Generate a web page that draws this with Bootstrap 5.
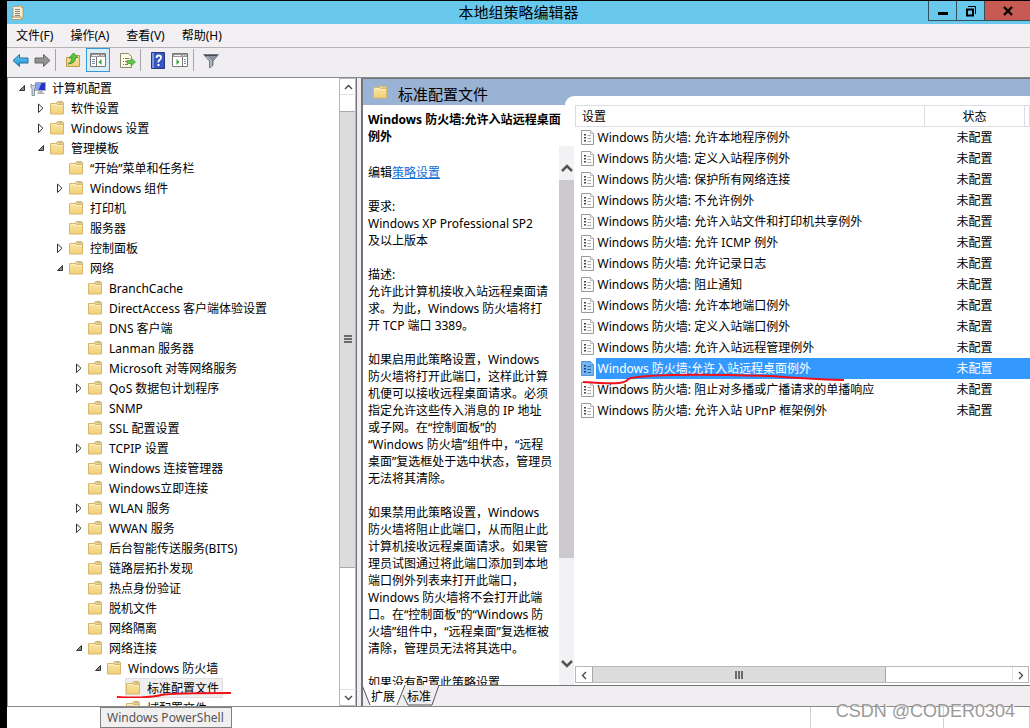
<!DOCTYPE html>
<html lang="zh-CN">
<head>
<meta charset="utf-8">
<meta name="viewport" content="width=device-width, initial-scale=1">
<title>本地组策略编辑器</title>
<link href="https://cdn.jsdelivr.net/npm/bootstrap@5.3.0/dist/css/bootstrap.min.css" rel="stylesheet">
<style>
  body { font-family: "Noto Sans", "Noto Sans CJK SC", sans-serif; font-size: 12px; line-height: 17px; color: #000; background: #000; padding: 1px 0 0 7px; }
  button { font: inherit; color: inherit; background: none; border: 0; padding: 0; }
  svg { display: block; flex: none; }
  .titlebar { display: grid; grid-template-columns: 1fr auto 1fr; background: #69c9ec; height: 23px; }
  .titlebar h1 { font-size: 15px; line-height: 23px; font-weight: 400; margin: 0; }
  .winbtn { width: 28px; height: 20px; border: 1px solid #34505c; border-top: 0; border-right: 0; display: flex; align-items: center; justify-content: center; }
  .winbtn.shut { width: 46px; background: #c75a52; }
  .menubar { background: #f2f0f2; height: 23px; padding-left: 9px; gap: 17px; }
  .tools { background: #f0eef0; height: 31px; border-top: 1px solid #b4b4b4; border-bottom: 1px solid #88888c; padding: 0 0 5px 4px; }
  .tools button { width: 18px; height: 24px; display: flex; align-items: center; justify-content: center; }
  .tools .pressed { width: 24px; background: #d9edf8; border: 1px solid #3399d6; }
  .divider { width: 1px; height: 22px; background: #a5a5a8; }
  .work { background: #f0eef0; }
  .treepane { width: 350px; background: #fff; border-left: 1px solid #999; border-right: 1px solid #74747a; }
  .tree, .tree ul { list-style: none; margin: 0; padding: 0; }
  .tree ul { padding-left: 19px; }
  .node { display: flex; align-items: center; height: 20px; padding-left: 9px; white-space: nowrap; position: relative; }
  .node .twist { width: 10px; height: 10px; margin-right: 3px; flex: none; }
  .node .label { padding-left: 6px; }
  .node .picked { display: flex; align-items: center; height: 20px; background: #f0eff0; outline: 1px solid #e0e0e0; outline-offset: -1px; padding-right: 4px; }
  .stroke { position: absolute; pointer-events: none; }
  .vbar { width: 17px; border: 1px solid #b8b8ba; background: #fff; }
  .vbar button, .hbar button { width: 16px; height: 16px; display: flex; align-items: center; justify-content: center; }
  .vbar .thumb { background: #dcdcdd; border: 1px solid #a8a8b4; border-width: 1px 0; margin-top: 16px; flex: 0 0 73%; }
  .rightpane { border-left: 2px solid #747478; margin-left: 4px; }
  .heading { height: 27px; background: #9ab2d3; border-top: 1px solid #747478; padding-left: 9px; }
  .heading h2 { font-size: 15px; line-height: 20px; font-weight: 400; margin: 4px 0 0 10px; }
  .about { width: 212px; background: #fff; }
  .about h3 { font-size: 12px; line-height: 17px; font-weight: 700; margin: 0; padding: 6px 0 0 5px; white-space: nowrap; height: 43px; }
  .prose { padding: 18px 0 0 5px; white-space: nowrap; }
  .prose p { margin: 0 0 17px; }
  .prose a { color: #0a6fd6; }
  .softbar { width: 16px; background: #f2f1f3; border-right: 1px solid #fff; }
  .softbar button { height: 34px; display: flex; align-items: center; justify-content: center; }
  .softbar .thumb { background: #cccacc; flex: 0 0 378px; }
  .listing { background: #fff; margin-top: -9px; padding-top: 9px; position: relative; }
  .listing::before { content: ""; position: absolute; left: -10px; top: 0; width: 10px; height: 9px; background: #fff; border-top-left-radius: 10px; }
  .grid { table-layout: fixed; color: #000; margin: 0; }
  .grid > :not(caption) > * > * { padding: 0 0 0 2px; height: 21px; line-height: 19px; vertical-align: middle; background: none; color: inherit; white-space: nowrap; box-shadow: none; }
  .grid > thead > tr > th { font-weight: 400; border: 1px solid #dcdce2; border-left: 0; padding-left: 6px; }
  .grid > thead > tr > th:first-child { border-left: 1px solid #dcdce2; }
  .grid > tbody > tr > td:first-child { padding-left: 5px; }
  .grid > tbody > tr > td.state, .grid > thead > tr > th.state { text-align: center; padding: 0; }
  .grid > tbody > tr.chosen > td { color: #fff; position: relative; }
  .grid > tbody > tr.chosen > td:not(:first-child) { background: #3399ff; }
  .hbar { height: 17px; border: 1px solid #b8b8ba; background: #fff; margin: 0 1px 2px 0; }
  .hbar .thumb { background: #dcdcdd; border: 1px solid #a8a8a8; border-width: 0 1px; flex: 0 0 65%; }
  .tabs { height: 21px; position: relative; border-top: 1px solid #747478; }
  .tabs button { position: relative; line-height: 19px; }
  .tabs svg { position: absolute; left: -2px; top: -1px; }
  .under { height: 22px; border-top: 1px solid #88888c; background: #fff; position: relative; }
  .tip { margin-left: 93px; padding: 0 7px 0 6px; line-height: 19px; border: 1px solid #808080; background: #f1f0f1; color: #555; font-size: 12px; }
  .cell { border-right: 1px solid #d0d0d0; }
  .stamp { position: absolute; right: 15px; bottom: 5px; font: 18px/24px "Liberation Sans", sans-serif; color: #9a9a9a; text-shadow: 1px 1px 0 #fff; white-space: nowrap; }
</style>
</head>
<body class="d-flex flex-column vh-100 overflow-hidden">

<svg width="0" height="0" class="position-absolute" aria-hidden="true">
  <defs>
    <linearGradient id="gold" x1="0" y1="0" x2="0" y2="1"><stop offset="0" stop-color="#fae5a4"/><stop offset="1" stop-color="#f2d078"/></linearGradient>
    <linearGradient id="blue" x1="0" y1="0" x2="0" y2="1"><stop offset="0" stop-color="#6fd0f7"/><stop offset="1" stop-color="#168ed2"/></linearGradient>
    <symbol id="folder" viewBox="0 0 16 16">
      <path d="M7.500 5V2.500l1-1h4.500l1.500 1V5z" fill="#f2d58b" stroke="#c8a95e" stroke-width=".8"/>
      <path d="M10 2.700h3" stroke="#8fb6cf"/>
      <path d="M1.500 3.500h6l1.500 1h5.500v9.500h-13z" fill="url(#gold)" stroke="#d6b76c"/>
      <path d="M2.500 4.500h4.500l1.500 1h5" fill="none" stroke="#fff3cf" stroke-width=".8"/>
    </symbol>
    <symbol id="shut" viewBox="0 0 10 10"><path d="M2.500 1v8.500l4.500-4.250z" fill="#fff" stroke="#333"/></symbol>
    <symbol id="open" viewBox="0 0 10 10"><path d="M7.500 2.500v5h-5z" fill="#8a8a8a" stroke="#333"/></symbol>
    <symbol id="sheet" viewBox="0 0 13 15">
      <path d="M.5.5h9l3 3v11h-12z" fill="#fcfcfc" stroke="#9a9a9a"/><path d="M9.500.5v3h3" fill="#eee" stroke="#bbb"/>
      <path d="M3 4h2v1.500H3zM3 7h2v1.500H3zM3 10h2v1.500H3z" fill="#444"/><path d="M6.500 5.500H10M6.500 8.500H10M6.500 11.500H10" stroke="#aaa"/>
    </symbol>
    <symbol id="sheetblue" viewBox="0 0 13 15">
      <path d="M.5.5h9l3 3v11h-12z" fill="#76b4f2" stroke="#4f93d8"/><path d="M9.500.5v3h3" fill="#a8d0f8" stroke="#5c9cdd"/>
      <path d="M3 4h2v1.500H3zM3 7h2v1.500H3zM3 10h2v1.500H3z" fill="#123f78"/><path d="M6.500 5.500H10M6.500 8.500H10M6.500 11.500H10" stroke="#2a65a8"/>
    </symbol>
  </defs>
</svg>

<header class="titlebar flex-shrink-0">
  <svg class="mt-1 ms-1" width="13" height="15" viewBox="0 0 13 15" aria-hidden="true"><path d="M2 1.500q-1.500 1 0 2V12H0q0 2.500 2 2.500h8.500q1.500-.5 1.500-2.500V3q0-2-2-2z" fill="#f5edcf" stroke="#a48f64" stroke-width=".8"/><path d="M10 1q2.500 0 2.500 2H10z" fill="#c7a976"/><path d="M4 4.500h5M4 6.500h5M4 8.500h5M4 10.500h5" stroke="#8d8373"/><path d="M1 12h9q0 2 1 2" fill="none" stroke="#b18b67"/></svg>
  <h1>本地组策略编辑器</h1>
  <div class="d-flex justify-content-end">
    <button class="winbtn" aria-label="最小化"><svg width="12" height="12"><path d="M1 7h10v3H1z"/></svg></button>
    <button class="winbtn" aria-label="还原"><svg width="12" height="12" fill="none" stroke="#000"><path d="M2 4.500h6v6H2z" stroke-width="2"/><path d="M3 1.500h7.500V9"/></svg></button>
    <button class="winbtn shut" aria-label="关闭"><svg width="10" height="10"><path d="M1 1l8 8M9 1L1 9" stroke="#000" stroke-width="2.400"/></svg></button>
  </div>
</header>

<nav class="menubar d-flex align-items-center flex-shrink-0">
  <button>文件(F)</button><button>操作(A)</button><button>查看(V)</button><button>帮助(H)</button>
</nav>

<div class="tools d-flex align-items-center flex-shrink-0" role="toolbar">
  <button aria-label="后退"><svg width="17" height="15"><path d="M1 7.500L7.500 1.500V5H16v5H7.500v3.500z" fill="url(#blue)" stroke="#286f9f"/></svg></button>
  <button class="ms-1" aria-label="前进"><svg width="17" height="15"><path d="M16 7.500L9.500 1.500V5H1v5h8.500v3.500z" fill="#929292" stroke="#666"/></svg></button>
  <span class="divider ms-1"></span>
  <button class="ms-2" aria-label="上一级"><svg width="16" height="16"><path d="M1.500 5.500h6l1-2h6v11h-13z" fill="url(#gold)" stroke="#c09a4a"/><path d="M3 12q4-2 4-6H4l4.500-5L13 5.500h-2.500q0 6-7.500 6.500z" fill="#58c740" stroke="#2d8b22" stroke-width=".8"/></svg></button>
  <button class="pressed ms-1" aria-label="显示控制台树"><svg width="16" height="14"><path d="M.5.5h15v13H.5z" fill="#fff" stroke="#777"/><path d="M1 1h14v3H1z" fill="#999"/><path d="M2 2.500h7M11 2.500h1M13 2.500h1" stroke="#eee"/><path d="M6.500 4v9.500" stroke="#777"/><path d="M2 6.500h3M2 8.500h3M2 10.500h3" stroke="#778fa8"/><path d="M11.500 6v6l-3-3z" fill="#35a52f"/></svg></button>
  <button class="ms-2" aria-label="导出列表"><svg width="17" height="16"><path d="M1.500 1.500h8l3 3v11h-11z" fill="#fffbe3" stroke="#8b8b76"/><path d="M4 6.500h1M6 6.500h4M4 9.500h1M6 9.500h3M4 12.500h1M6 12.500h3" stroke="#777"/><path d="M8 8.500h4V6l4.500 4-4.500 4v-2.500H8z" fill="#62c64c" stroke="#3b9f2d" stroke-width=".7"/></svg></button>
  <span class="divider ms-1"></span>
  <button class="ms-2" aria-label="帮助"><svg width="14" height="17"><path d="M.5.5h13v16H.5z" fill="#3657c0" stroke="#23378b"/><path d="M1 1h2v15H1z" fill="#7894e3"/><path d="M5.500 6q0-2.500 2.300-2.500T10 5.500Q10 7 8.500 8t-1 2.500" fill="none" stroke="#fff" stroke-width="1.800"/><path d="M6.500 12h2v2h-2z" fill="#fff"/></svg></button>
  <button class="ms-1" aria-label="显示操作窗格"><svg width="16" height="14"><path d="M.5.5h15v13H.5z" fill="#fff" stroke="#777"/><path d="M1 1h14v3H1z" fill="#999"/><path d="M2 2.500h7M11 2.500h1M13 2.500h1" stroke="#eee"/><path d="M10.500 4v9.500" stroke="#777"/><path d="M12 6.500h2M12 8.500h2M12 10.500h2" stroke="#778fa8"/><path d="M4.500 6v6l3-3z" fill="#35a52f"/></svg></button>
  <span class="divider ms-1"></span>
  <button class="ms-2" aria-label="筛选器"><svg width="16" height="15"><path d="M.5 1.500h15L10 8v4.500L6.500 15V8z" fill="#88919c" stroke="#606a75" stroke-width=".8"/><path d="M2 2.500h12" stroke="#3f4c58"/><path d="M4 4l4 4v6" fill="none" stroke="#d2d8de"/></svg></button>
</div>

<main class="work d-flex flex-grow-1 overflow-hidden">
  <section class="treepane d-flex flex-shrink-0">
    <div class="flex-grow-1 overflow-hidden">
      <ul class="tree">
        <li><div class="node"><svg class="twist"><use href="#open"/></svg><svg width="16" height="16"><path d="M5.500 2.500h10v8h-10z" fill="#2137c6" stroke="#a9a9bc"/><path d="M6 3h5.500l-3 7H6z" fill="#8c9ff3"/><path d="M8.500 11h4v1.500h2V14H7v-1.500h1.500z" fill="#b4b4ba"/><path d="M1 4v3q0 1 1 1.500V15.500h2.500v-7q1-.5 1-1.500V4L4 5.500H2.500z" fill="#c9d6df" stroke="#6d808d" stroke-width=".8"/></svg><span class="label">计算机配置</span></div>
          <ul>
            <li><div class="node"><svg class="twist"><use href="#shut"/></svg><svg width="16" height="16"><use href="#folder"/></svg><span class="label">软件设置</span></div></li>
            <li><div class="node"><svg class="twist"><use href="#shut"/></svg><svg width="16" height="16"><use href="#folder"/></svg><span class="label">Windows 设置</span></div></li>
            <li><div class="node"><svg class="twist"><use href="#open"/></svg><svg width="16" height="16"><use href="#folder"/></svg><span class="label">管理模板</span></div>
              <ul>
                <li><div class="node"><span class="twist"></span><svg width="16" height="16"><use href="#folder"/></svg><span class="label">“开始”菜单和任务栏</span></div></li>
                <li><div class="node"><svg class="twist"><use href="#shut"/></svg><svg width="16" height="16"><use href="#folder"/></svg><span class="label">Windows 组件</span></div></li>
                <li><div class="node"><span class="twist"></span><svg width="16" height="16"><use href="#folder"/></svg><span class="label">打印机</span></div></li>
                <li><div class="node"><span class="twist"></span><svg width="16" height="16"><use href="#folder"/></svg><span class="label">服务器</span></div></li>
                <li><div class="node"><svg class="twist"><use href="#shut"/></svg><svg width="16" height="16"><use href="#folder"/></svg><span class="label">控制面板</span></div></li>
                <li><div class="node"><svg class="twist"><use href="#open"/></svg><svg width="16" height="16"><use href="#folder"/></svg><span class="label">网络</span></div>
                  <ul>
                    <li><div class="node"><span class="twist"></span><svg width="16" height="16"><use href="#folder"/></svg><span class="label">BranchCache</span></div></li>
                    <li><div class="node"><span class="twist"></span><svg width="16" height="16"><use href="#folder"/></svg><span class="label">DirectAccess 客户端体验设置</span></div></li>
                    <li><div class="node"><span class="twist"></span><svg width="16" height="16"><use href="#folder"/></svg><span class="label">DNS 客户端</span></div></li>
                    <li><div class="node"><span class="twist"></span><svg width="16" height="16"><use href="#folder"/></svg><span class="label">Lanman 服务器</span></div></li>
                    <li><div class="node"><svg class="twist"><use href="#shut"/></svg><svg width="16" height="16"><use href="#folder"/></svg><span class="label">Microsoft 对等网络服务</span></div></li>
                    <li><div class="node"><svg class="twist"><use href="#shut"/></svg><svg width="16" height="16"><use href="#folder"/></svg><span class="label">QoS 数据包计划程序</span></div></li>
                    <li><div class="node"><span class="twist"></span><svg width="16" height="16"><use href="#folder"/></svg><span class="label">SNMP</span></div></li>
                    <li><div class="node"><span class="twist"></span><svg width="16" height="16"><use href="#folder"/></svg><span class="label">SSL 配置设置</span></div></li>
                    <li><div class="node"><svg class="twist"><use href="#shut"/></svg><svg width="16" height="16"><use href="#folder"/></svg><span class="label">TCPIP 设置</span></div></li>
                    <li><div class="node"><span class="twist"></span><svg width="16" height="16"><use href="#folder"/></svg><span class="label">Windows 连接管理器</span></div></li>
                    <li><div class="node"><span class="twist"></span><svg width="16" height="16"><use href="#folder"/></svg><span class="label">Windows立即连接</span></div></li>
                    <li><div class="node"><svg class="twist"><use href="#shut"/></svg><svg width="16" height="16"><use href="#folder"/></svg><span class="label">WLAN 服务</span></div></li>
                    <li><div class="node"><svg class="twist"><use href="#shut"/></svg><svg width="16" height="16"><use href="#folder"/></svg><span class="label">WWAN 服务</span></div></li>
                    <li><div class="node"><span class="twist"></span><svg width="16" height="16"><use href="#folder"/></svg><span class="label">后台智能传送服务(BITS)</span></div></li>
                    <li><div class="node"><span class="twist"></span><svg width="16" height="16"><use href="#folder"/></svg><span class="label">链路层拓扑发现</span></div></li>
                    <li><div class="node"><span class="twist"></span><svg width="16" height="16"><use href="#folder"/></svg><span class="label">热点身份验证</span></div></li>
                    <li><div class="node"><span class="twist"></span><svg width="16" height="16"><use href="#folder"/></svg><span class="label">脱机文件</span></div></li>
                    <li><div class="node"><span class="twist"></span><svg width="16" height="16"><use href="#folder"/></svg><span class="label">网络隔离</span></div></li>
                    <li><div class="node"><svg class="twist"><use href="#open"/></svg><svg width="16" height="16"><use href="#folder"/></svg><span class="label">网络连接</span></div>
                      <ul>
                        <li><div class="node"><svg class="twist"><use href="#open"/></svg><svg width="16" height="16"><use href="#folder"/></svg><span class="label">Windows 防火墙</span></div>
                          <ul>
                            <li><div class="node"><span class="twist"></span><span class="picked"><svg width="16" height="16"><use href="#folder"/></svg><span class="label">标准配置文件</span></span>
                              <svg class="stroke start-0 bottom-0" width="130" height="8" fill="none" stroke="#f0101a" stroke-width="2"><path d="M14 7q18 1 30 0t14-2q10-2 70-2"/></svg></div></li>
                            <li><div class="node"><span class="twist"></span><svg width="16" height="16"><use href="#folder"/></svg><span class="label">域配置文件</span></div></li>
                          </ul></li>
                      </ul></li>
                  </ul></li>
              </ul></li>
          </ul></li>
      </ul>
    </div>
    <div class="vbar d-flex flex-column flex-shrink-0">
      <button class="border-bottom" aria-label="向上滚动"><svg width="9" height="6"><path d="M1 5l3.500-3.500L8 5" fill="none" stroke="#444" stroke-width="1.300"/></svg></button>
      <div class="thumb d-flex align-items-center justify-content-center"><svg width="8" height="8"><path d="M0 1h8M0 4h8M0 7h8" stroke="#444" stroke-width="1.500"/></svg></div>
      <button class="mt-auto border-top" aria-label="向下滚动"><svg width="9" height="6"><path d="M1 1l3.500 3.500L8 1" fill="none" stroke="#444" stroke-width="1.300"/></svg></button>
    </div>
  </section>

  <section class="rightpane d-flex flex-column flex-grow-1 overflow-hidden">
    <div class="heading d-flex align-items-center flex-shrink-0"><svg width="16" height="16"><use href="#folder"/></svg><h2>标准配置文件</h2></div>
    <div class="d-flex flex-grow-1" style="min-height:0">
      <article class="about d-flex flex-column flex-shrink-0">
        <h3>Windows 防火墙:允许入站远程桌面<br>例外</h3>
        <div class="d-flex flex-grow-1 overflow-hidden">
          <div class="prose flex-grow-1 overflow-hidden">
            <p>编辑<a href="#">策略设置</a></p>
            <p>要求:<br>Windows XP Professional SP2<br>及以上版本</p>
            <p>描述:<br>允许此计算机接收入站远程桌面请<br>求。为此，Windows 防火墙将打<br>开 TCP 端口 3389。</p>
            <p>如果启用此策略设置，Windows<br>防火墙将打开此端口，这样此计算<br>机便可以接收远程桌面请求。必须<br>指定允许这些传入消息的 IP 地址<br>或子网。在“控制面板”的<br>“Windows 防火墙”组件中，“远程<br>桌面”复选框处于选中状态，管理员<br>无法将其清除。</p>
            <p>如果禁用此策略设置，Windows<br>防火墙将阻止此端口，从而阻止此<br>计算机接收远程桌面请求。如果管<br>理员试图通过将此端口添加到本地<br>端口例外列表来打开此端口，<br>Windows 防火墙将不会打开此端<br>口。在“控制面板”的“Windows 防<br>火墙”组件中，“远程桌面”复选框被<br>清除，管理员无法将其选中。</p>
            <p>如果没有配置此策略设置</p>
          </div>
          <div class="softbar d-flex flex-column flex-shrink-0">
            <button aria-label="向上滚动"><svg class="mt-2" width="12" height="9"><path d="M1 8l5-5 5 5" fill="none" stroke="#555" stroke-width="2.500"/></svg></button>
            <div class="thumb"></div>
            <button class="mt-auto mb-1" aria-label="向下滚动"><svg width="12" height="9"><path d="M1 1l5 5 5-5" fill="none" stroke="#555" stroke-width="2.500"/></svg></button>
          </div>
        </div>
      </article>
      <div class="listing d-flex flex-column flex-grow-1">
        <table class="table table-borderless grid">
          <colgroup><col style="width:20px"><col><col style="width:100px"><col style="width:5px"></colgroup>
          <thead><tr><th colspan="2">设置</th><th class="state">状态</th><th class="p-0"></th></tr></thead>
          <tbody>
            <tr><td><svg width="13" height="15"><use href="#sheet"/></svg></td><td>Windows 防火墙: 允许本地程序例外</td><td class="state">未配置</td><td></td></tr>
            <tr><td><svg width="13" height="15"><use href="#sheet"/></svg></td><td>Windows 防火墙: 定义入站程序例外</td><td class="state">未配置</td><td></td></tr>
            <tr><td><svg width="13" height="15"><use href="#sheet"/></svg></td><td>Windows 防火墙: 保护所有网络连接</td><td class="state">未配置</td><td></td></tr>
            <tr><td><svg width="13" height="15"><use href="#sheet"/></svg></td><td>Windows 防火墙: 不允许例外</td><td class="state">未配置</td><td></td></tr>
            <tr><td><svg width="13" height="15"><use href="#sheet"/></svg></td><td>Windows 防火墙: 允许入站文件和打印机共享例外</td><td class="state">未配置</td><td></td></tr>
            <tr><td><svg width="13" height="15"><use href="#sheet"/></svg></td><td>Windows 防火墙: 允许 ICMP 例外</td><td class="state">未配置</td><td></td></tr>
            <tr><td><svg width="13" height="15"><use href="#sheet"/></svg></td><td>Windows 防火墙: 允许记录日志</td><td class="state">未配置</td><td></td></tr>
            <tr><td><svg width="13" height="15"><use href="#sheet"/></svg></td><td>Windows 防火墙: 阻止通知</td><td class="state">未配置</td><td></td></tr>
            <tr><td><svg width="13" height="15"><use href="#sheet"/></svg></td><td>Windows 防火墙: 允许本地端口例外</td><td class="state">未配置</td><td></td></tr>
            <tr><td><svg width="13" height="15"><use href="#sheet"/></svg></td><td>Windows 防火墙: 定义入站端口例外</td><td class="state">未配置</td><td></td></tr>
            <tr><td><svg width="13" height="15"><use href="#sheet"/></svg></td><td>Windows 防火墙: 允许入站远程管理例外</td><td class="state">未配置</td><td></td></tr>
            <tr class="chosen"><td class="z-1"><svg width="13" height="15"><use href="#sheetblue"/></svg><svg class="stroke start-0 top-0" width="272" height="28" fill="none" stroke="#f0101a" stroke-width="2"><path d="M7 24q28 2 36 1t9-4q8-3 43-4t100 1q38 3 73 4"/></svg></td><td>Windows 防火墙:允许入站远程桌面例外</td><td class="state">未配置</td><td></td></tr>
            <tr><td><svg width="13" height="15"><use href="#sheet"/></svg></td><td>Windows 防火墙: 阻止对多播或广播请求的单播响应</td><td class="state">未配置</td><td></td></tr>
            <tr><td><svg width="13" height="15"><use href="#sheet"/></svg></td><td>Windows 防火墙: 允许入站 UPnP 框架例外</td><td class="state">未配置</td><td></td></tr>
          </tbody>
        </table>
        <div class="hbar d-flex mt-auto">
          <button aria-label="向左滚动"><svg width="6" height="9"><path d="M5 1L1.500 4.500 5 8" fill="none" stroke="#444" stroke-width="1.300"/></svg></button>
          <div class="thumb d-flex align-items-center justify-content-center"><svg width="8" height="8"><path d="M1 0v8M4 0v8M7 0v8" stroke="#444" stroke-width="1.500"/></svg></div>
          <button class="ms-auto border-start" aria-label="向右滚动"><svg width="6" height="9"><path d="M1 1l3.500 3.500L1 8" fill="none" stroke="#444" stroke-width="1.300"/></svg></button>
        </div>
      </div>
    </div>
    <div class="tabs d-flex flex-shrink-0 ps-2">
      <svg width="80" height="21"><path d="M41 0l6 20h24l7-20z" fill="#f0eef0"/><path d="M42 10l5 10h24l7-20" fill="none" stroke="#555"/><path d="M1 0l8 20h27l8-20z" fill="#fff"/><path d="M1 0l8 20M36 20l8-20" fill="none" stroke="#555"/></svg>
      <button>扩展</button><button class="ms-2 ps-1">标准</button>
    </div>
  </section>
</main>

<footer class="under d-flex flex-shrink-0">
  <div class="tip">Windows PowerShell</div>
  <div class="cell flex-grow-1"></div><div class="cell" style="width:133px"></div><div class="cell" style="width:86px"></div>
  <div class="stamp">CSDN @CODER0304</div>
</footer>

<script src="https://cdn.jsdelivr.net/npm/bootstrap@5.3.0/dist/js/bootstrap.bundle.min.js"></script>
</body>
</html>
